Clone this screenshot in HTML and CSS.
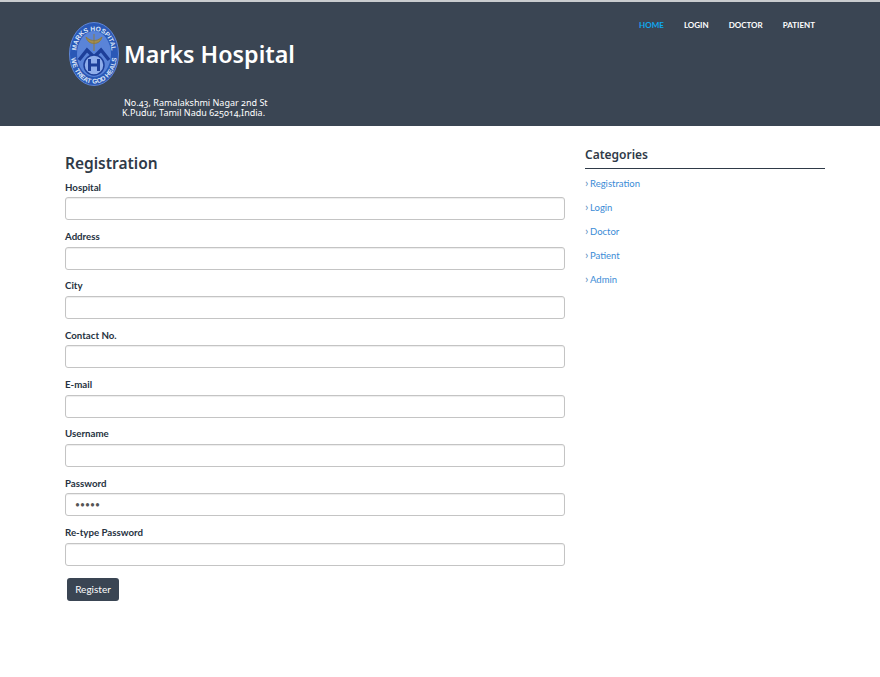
FILE: index.html
```html
<!DOCTYPE html>
<html>
<head>
  <meta charset="utf-8">
  <title>Marks Hospital - Registration</title>
  <link rel="stylesheet" href="styles.css">
</head>
<body>
  <div class="header">
    <div class="header-inner">
      <div class="brand">
        <div class="brand-row">
          <svg class="logo" viewBox="0 0 50 64" width="50" height="64">
            <defs>
              <path id="arcTop" d="M7.5 37 C6 18 14 9 25 9 C36 9 44 18 42.5 37"/>
              <path id="arcBottom" d="M2.5 38 C5 53 14 61.5 25 61.5 C36 61.5 45 53 47.5 38"/>
            </defs>
            <ellipse cx="25" cy="32" rx="24.5" ry="31.5" fill="#2a58b6" stroke="#5f86d6" stroke-width="1"/>
            <ellipse cx="25" cy="32" rx="17" ry="23" fill="#5a84d8"/>
            <path d="M25 12v17M17 15c3 3 6 3.5 8 3.5s5-.5 8-3.5c-1 4-4 6.5-8 6.500s-7-2.500-8-6.500z" fill="#a58d4c" stroke="#8a7a45" stroke-width="1"/>
            <path d="M10 38l8-10 7 7 7-7 8 10" fill="none" stroke="#1d3f99" stroke-width="3.500"/>
            <circle cx="25" cy="43" r="10" fill="#8fadea" stroke="#1d3f99" stroke-width="1.500"/>
            <path d="M20.500 37v12M29.500 37v12M20.500 43h9" fill="none" stroke="#1d3f99" stroke-width="3"/>
            <text class="logo-text"><textPath href="#arcTop" startOffset="50%" text-anchor="middle">MARKS HOSPITAL</textPath></text>
            <text class="logo-text"><textPath href="#arcBottom" startOffset="50%" text-anchor="middle">WE TREAT GOD HEALS</textPath></text>
          </svg>
          <h1 class="site-title">Marks Hospital</h1>
        </div>
        <p class="address"><span class="address-first">No.43, Ramalakshmi Nagar 2nd St</span><br>K.Pudur, Tamil Nadu 625014,India.</p>
      </div>
      <ul class="nav">
        <li><a class="active" href="#">Home</a></li>
        <li><a href="#">Login</a></li>
        <li><a href="#">Doctor</a></li>
        <li><a href="#">Patient</a></li>
      </ul>
    </div>
  </div>

  <div class="content">
    <div class="main">
      <h2>Registration</h2>
      <form>
        <label for="hospital">Hospital</label>
        <input type="text" id="hospital">
        <label for="address">Address</label>
        <input type="text" id="address">
        <label for="city">City</label>
        <input type="text" id="city">
        <label for="contact">Contact No.</label>
        <input type="text" id="contact">
        <label for="email">E-mail</label>
        <input type="text" id="email">
        <label for="username">Username</label>
        <input type="text" id="username">
        <label for="password">Password</label>
        <input type="password" id="password" value="admin">
        <label for="retype">Re-type Password</label>
        <input type="password" id="retype">
        <button type="button" class="btn">Register</button>
      </form>
    </div>
    <div class="sidebar">
      <h3>Categories</h3>
      <ul class="cat-list">
        <li><a href="#">Registration</a></li>
        <li><a href="#">Login</a></li>
        <li><a href="#">Doctor</a></li>
        <li><a href="#">Patient</a></li>
        <li><a href="#">Admin</a></li>
      </ul>
    </div>
  </div>
</body>
</html>
```

FILE: styles.css
```css
/* Page */
body {
  font-family: Lato, "Liberation Sans", sans-serif;
  font-size: 10px;
  margin: 0;
  padding: 0;
  color: #2f3a48;
  background-color: #fff;
}

/* Header */
.header {
  height: 124px;
  background-color: #3a4553;
  border-top: 2px solid #c9cccf;
}
.header-inner {
  display: flex;
  justify-content: space-between;
  padding: 20px 65px 0 69px;
}
.brand-row {
  display: flex;
  align-items: center;
  gap: 5px;
}
.logo {
  display: block;
}
.logo-text {
  font-family: "Liberation Sans", sans-serif;
  font-size: 6.6px;
  font-weight: bold;
  fill: #dbe5f8;
}
.site-title {
  margin: 0;
  font-family: "Noto Sans", sans-serif;
  font-size: 23.3px;
  font-weight: 600;
  color: #fff;
  line-height: 30px;
}
.address {
  margin: 12px 0 0 53px;
  font-family: "Noto Sans", sans-serif;
  font-size: 9px;
  font-variant-numeric: oldstyle-nums;
  line-height: 10px;
  color: #fff;
}
.address-first {
  margin-left: 2px;
}
.nav {
  display: flex;
  gap: 20px;
  list-style: none;
  margin: -4px 0 0;
  padding: 0;
}
.nav a {
  font-size: 8px;
  font-weight: bold;
  text-transform: uppercase;
  text-decoration: none;
  color: #fff;
}
.nav a.active {
  color: #0fa8ef;
}

/* Content */
.content {
  display: flex;
  gap: 20px;
  padding: 0 55px 0 65px;
}
.main {
  width: 500px;
}
h2 {
  margin: 29px 0 0;
  font-family: "Noto Sans", sans-serif;
  font-size: 15.5px;
  font-weight: 600;
  line-height: 16px;
  color: #2f3a48;
}
label {
  display: block;
  height: 15px;
  margin: 8.83px 0 2.5px;
  font-size: 9.7px;
  font-weight: bold;
  line-height: 15px;
  color: #263241;
}
input {
  display: block;
  width: 100%;
  height: 23px;
  padding: 0 9px;
  border: 1px solid #c4c4c4;
  border-radius: 3px;
  box-sizing: border-box;
  box-shadow: inset 0 1px 1px rgba(0, 0, 0, 0.075);
  font-family: Lato, sans-serif;
  font-size: 8.6px;
  color: #555;
}
.btn {
  display: block;
  margin: 12px 0 0 2px;
  width: 52px;
  height: 23px;
  padding: 0;
  border: none;
  border-radius: 3px;
  background-color: #3a4553;
  color: #fff;
  font-family: Lato, sans-serif;
  font-size: 10px;
}

/* Sidebar */
.sidebar {
  width: 240px;
}
h3 {
  margin: 21px 0 0;
  padding-bottom: 5px;
  border-bottom: 1px solid #2f3a48;
  font-family: "Noto Sans", sans-serif;
  font-size: 12px;
  font-weight: 600;
  line-height: 16px;
  color: #2f3a48;
}
.cat-list {
  list-style: none;
  margin: 8px 0 0;
  padding: 0;
}
.cat-list li {
  height: 24px;
  line-height: 13px;
}
.cat-list a {
  font-size: 9.5px;
  color: #3a8bd6;
  text-decoration: none;
}
.cat-list a::before {
  content: "›";
  display: inline-block;
  width: 5px;
  font-size: 12px;
  line-height: 10px;
  color: #5f8fc0;
}
```
